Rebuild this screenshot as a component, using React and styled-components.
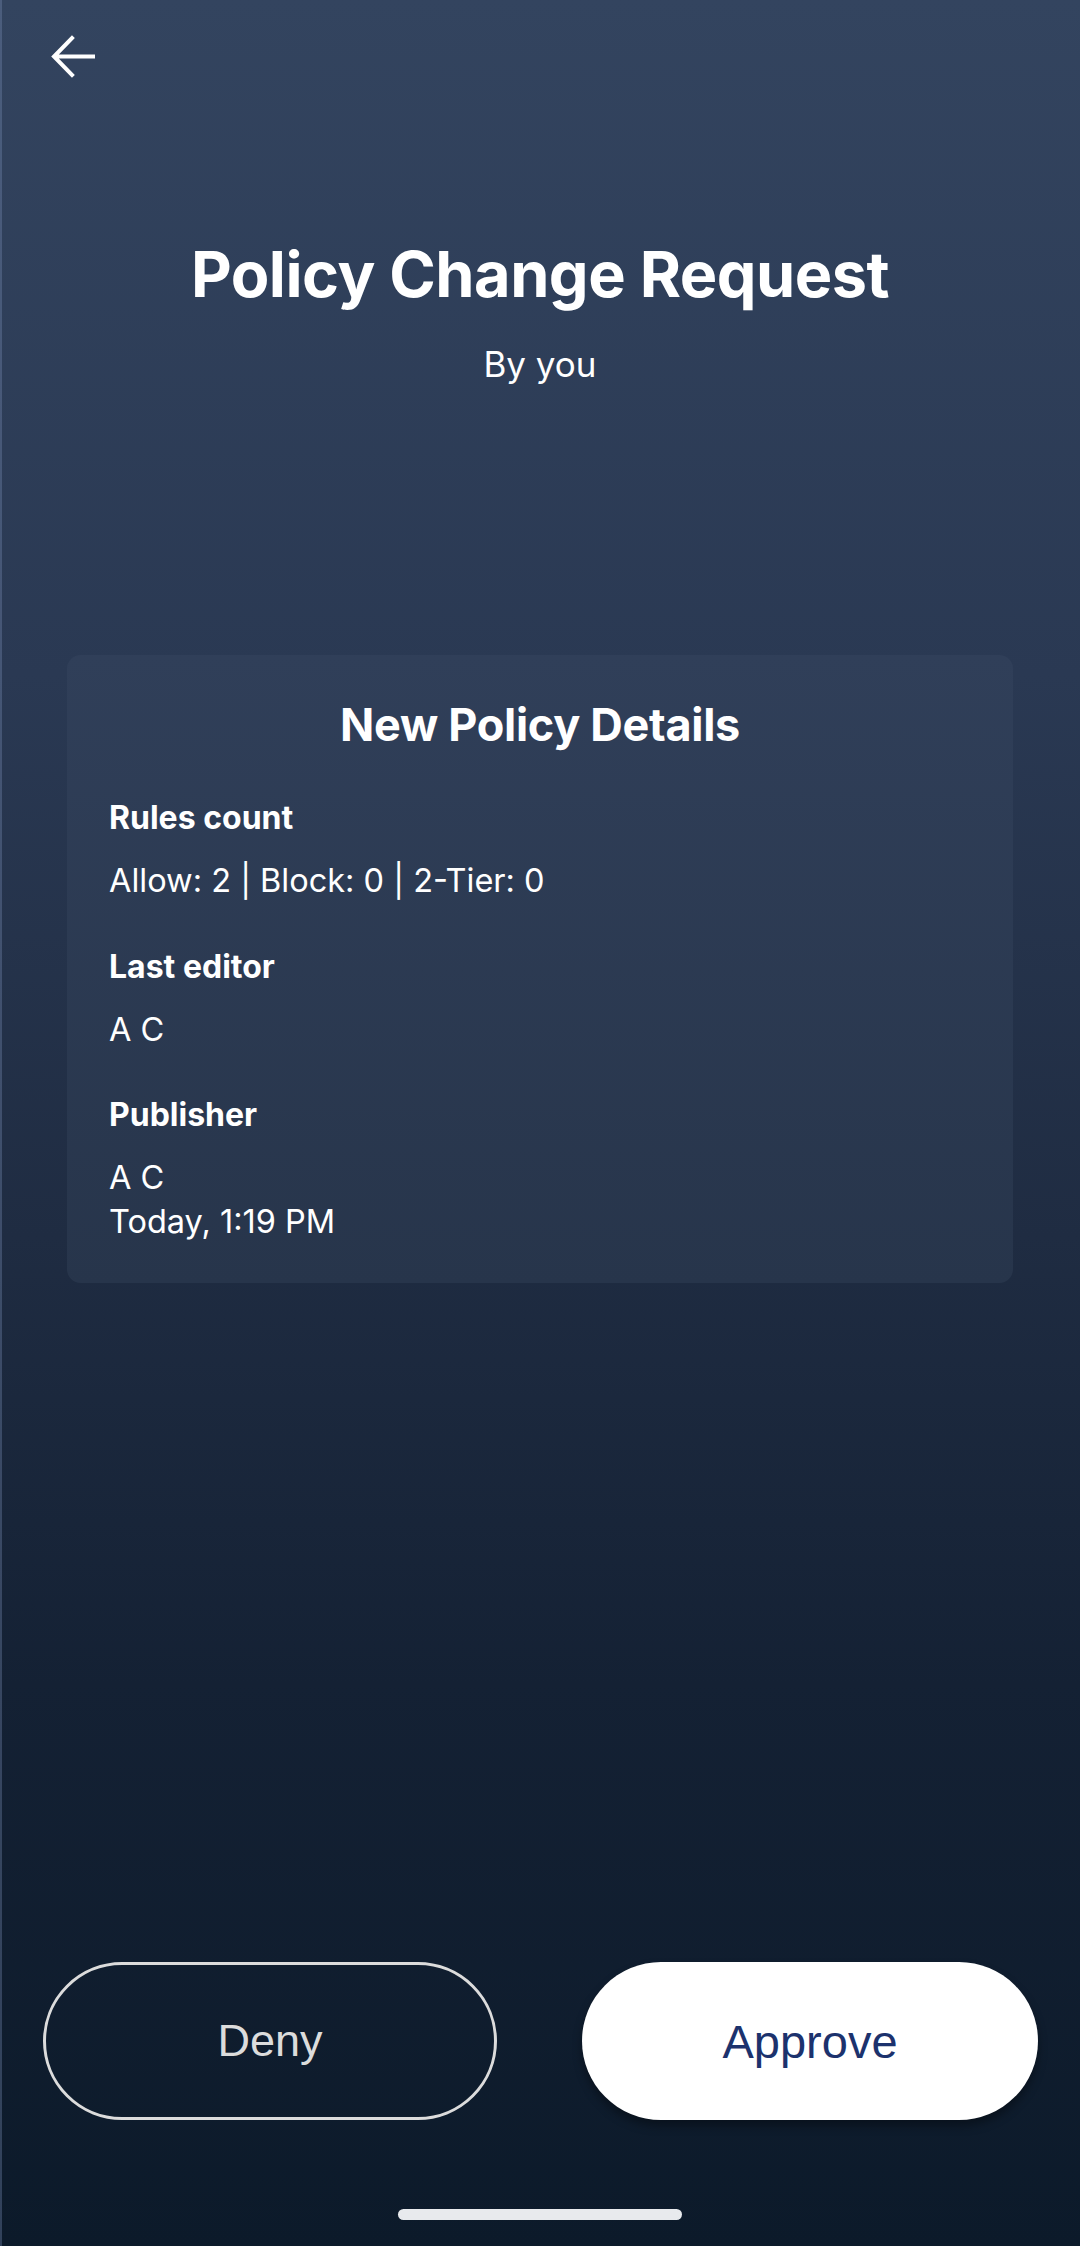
import React from "react";
import styled, { createGlobalStyle } from "styled-components";

const Global = createGlobalStyle`
  * { box-sizing: border-box; }
  html, body { margin: 0; padding: 0; background: #0c1a2a; }
  body { font-family: Inter, "Noto Sans", sans-serif; }
`;

const Page = styled.div`
  width: 1080px;
  height: 2246px;
  display: flex;
  flex-direction: column;
  background: linear-gradient(180deg, #33445f 0%, #2a3953 30%, #1f2c42 55%, #142134 75%, #0c1a2a 100%);
  box-shadow: inset 2px 0 0 rgba(120, 140, 180, 0.35);
  color: #ffffff;
  overflow: hidden;
`;

const TopBar = styled.div`
  height: 110px;
  padding: 35px 0 0 51px;
`;

const BackButton = styled.button`
  width: 44px;
  height: 44px;
  padding: 0;
  border: none;
  background: none;
  color: #ffffff;
  display: flex;
  align-items: center;
  justify-content: center;
`;

const Header = styled.header`
  display: flex;
  flex-direction: column;
  align-items: center;
  margin-top: 126px;
`;

const Title = styled.h1`
  margin: 0;
  font-size: 63px;
  line-height: 76px;
  font-weight: 700;
  letter-spacing: -0.5px;
`;

const Subtitle = styled.div`
  margin-top: 31px;
  font-size: 35px;
  line-height: 42px;
  font-weight: 400;
`;

const Card = styled.section`
  margin: 270px 67px 0;
  padding: 44px 42px 40px;
  border-radius: 14px;
  background: linear-gradient(180deg, #303f59 0%, #27354b 100%);
`;

const CardTitle = styled.h2`
  margin: 0;
  text-align: center;
  font-size: 45px;
  line-height: 52px;
  font-weight: 700;
  letter-spacing: -0.3px;
`;

const Field = styled.div`
  margin-top: ${(p) => (p.$first ? "45px" : "42px")};
`;

const Label = styled.div`
  font-size: 32px;
  line-height: 43px;
  font-weight: 700;
`;

const Value = styled.div`
  margin-top: 20px;
  font-size: 32.5px;
  line-height: 43.5px;
  font-weight: 400;
`;

const Spacer = styled.div`
  flex: 1;
`;

const Actions = styled.div`
  display: grid;
  grid-template-columns: 454px 456px;
  gap: 85px;
  padding: 0 42px 0 43px;
`;

const ActionButton = styled.button`
  height: 158px;
  border-radius: 79px;
  font-family: "Liberation Sans", Arial, sans-serif;
  font-size: ${(p) => (p.$primary ? "47px" : "45px")};
  font-weight: 400;
  border: ${(p) => (p.$primary ? "none" : "3px solid #dcdcdc")};
  background: ${(p) => (p.$primary ? "#ffffff" : "transparent")};
  color: ${(p) => (p.$primary ? "#1c326d" : "#dcdcdc")};
  box-shadow: ${(p) => (p.$primary ? "0 6px 10px rgba(0, 0, 0, 0.35)" : "none")};
`;

const HomeIndicator = styled.div`
  width: 284px;
  height: 11px;
  margin: 89px auto 26px;
  border-radius: 6px;
  background: #e8eaed;
`;

const fields = [
  { label: "Rules count", lines: ["Allow: 2 | Block: 0 | 2-Tier: 0"] },
  { label: "Last editor", lines: ["A C"] },
  { label: "Publisher", lines: ["A C", "Today, 1:19 PM"] },
];

export default function App() {
  return (
    <>
      <Global />
      <Page>
        <TopBar>
          <BackButton aria-label="Back">
            <svg width="44" height="44" viewBox="0 0 44 44" fill="none">
              <path
                d="M42 21.5H4M21 3L3 21.5L21 40"
                stroke="#ffffff"
                strokeWidth="4"
                strokeLinecap="square"
                strokeLinejoin="miter"
              />
            </svg>
          </BackButton>
        </TopBar>
        <Header>
          <Title>Policy Change Request</Title>
          <Subtitle>By you</Subtitle>
        </Header>
        <Card>
          <CardTitle>New Policy Details</CardTitle>
          {fields.map((f, i) => (
            <Field key={f.label} $first={i === 0}>
              <Label>{f.label}</Label>
              <Value>
                {f.lines.map((l) => (
                  <div key={l}>{l}</div>
                ))}
              </Value>
            </Field>
          ))}
        </Card>
        <Spacer />
        <Actions>
          <ActionButton>Deny</ActionButton>
          <ActionButton $primary>Approve</ActionButton>
        </Actions>
        <HomeIndicator />
      </Page>
    </>
  );
}
